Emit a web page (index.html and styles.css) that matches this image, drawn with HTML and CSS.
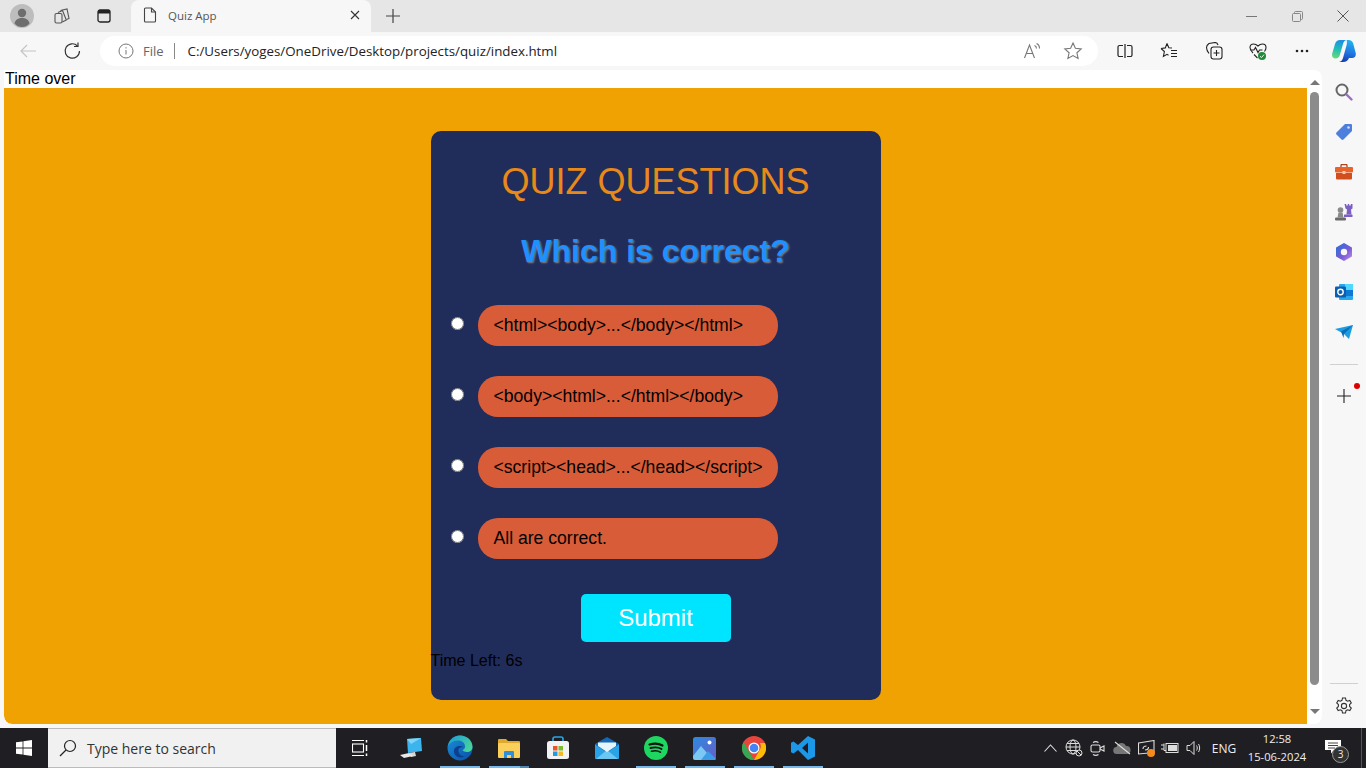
FILE: index.html
```html
<!DOCTYPE html>
<html lang="en">
<head>
    <meta charset="UTF-8">
    <meta name="viewport" content="width=device-width, initial-scale=1.0">
    <title>Quiz App</title>
    <link rel="stylesheet" href="styles.css">
</head>
<body>
  <div class="window">

    <!-- tab strip -->
    <div class="tabstrip">
      <div class="avatar">
        <svg width="24" height="24" viewBox="0 0 24 24"><circle cx="12" cy="12" r="12" fill="#bdbdbd"/><circle cx="12" cy="9" r="4.2" fill="#6e6e6e"/><path d="M4.5 19.5c.8-4 3.8-5.5 7.5-5.5s6.7 1.5 7.5 5.5c-2 2.500-4.500 3.500-7.500 3.500s-5.500-1-7.500-3.500z" fill="#6e6e6e"/></svg>
      </div>
      <div class="strip-btn workspaces">
        <svg width="18" height="18" viewBox="0 0 18 18" fill="none" stroke="#555" stroke-width="1.1"><path d="M7.500 3.500l6.500-1.500 2 9.500-2.500 1"/><path d="M5 5.500l4.500-2 3.800 9.500-4 2"/><rect x="2" y="6.500" width="7" height="9.500" rx="1.500"/></svg>
      </div>
      <div class="strip-btn tabactions">
        <svg width="16" height="16" viewBox="0 0 16 16"><rect x="2" y="2" width="12" height="12" rx="2" fill="none" stroke="#222" stroke-width="1.300"/><path d="M2 3.500a1.500 1.500 0 0 1 1.500-1.500h9a1.500 1.500 0 0 1 1.500 1.500v2h-12z" fill="#222"/></svg>
      </div>
      <div class="tab">
        <svg class="tab-icon" width="14" height="16" viewBox="0 0 14 16" fill="none" stroke="#444" stroke-width="1.100"><path d="M2.500 1h6l4 4v9a1 1 0 0 1-1 1h-9a1 1 0 0 1-1-1v-12a1 1 0 0 1 1-1z"/><path d="M8.500 1v4h4"/></svg>
        <span class="tab-title">Quiz App</span>
        <svg class="tab-close" width="10" height="10" viewBox="0 0 10 10" stroke="#333" stroke-width="1.100"><path d="M1 1l8 8M9 1l-8 8"/></svg>
      </div>
      <div class="strip-btn newtab">
        <svg width="16" height="16" viewBox="0 0 16 16" stroke="#444" stroke-width="1.200"><path d="M8 1v14M1 8h14"/></svg>
      </div>
      <div class="winctrls">
        <div class="winctrl"><svg width="11" height="11" viewBox="0 0 11 11" stroke="#777"><path d="M0 5.500h11"/></svg></div>
        <div class="winctrl"><svg width="11" height="11" viewBox="0 0 11 11" fill="none" stroke="#888"><rect x=".5" y="2.500" width="8" height="8" rx="1"/><path d="M2.500 2.500v-1a1 1 0 0 1 1-1h6a1 1 0 0 1 1 1v6a1 1 0 0 1-1 1h-1"/></svg></div>
        <div class="winctrl"><svg width="12" height="12" viewBox="0 0 12 12" stroke="#555"><path d="M.5.5l11 11M11.500.5l-11 11"/></svg></div>
      </div>
    </div>

    <!-- address bar row -->
    <div class="toolbar">
      <div class="nav-btn back">
        <svg width="18" height="16" viewBox="0 0 18 16" fill="none" stroke="#c4c4c4" stroke-width="1.200"><path d="M17 8h-15M8 2l-6 6 6 6"/></svg>
      </div>
      <div class="nav-btn reload">
        <svg width="18" height="18" viewBox="0 0 18 18" fill="none" stroke="#333" stroke-width="1.200"><path d="M14.500 4a7.200 7.200 0 1 0 2 5"/><path d="M15 .5v4h-4"/></svg>
      </div>
      <div class="addressbar">
        <svg class="info-icon" width="16" height="16" viewBox="0 0 16 16" fill="none" stroke="#777"><circle cx="8" cy="8" r="7"/><path d="M8 7v4.500M8 4.200v1.300"/></svg>
        <span class="file-label">File</span>
        <span class="addr-sep"></span>
        <span class="url">C:/Users/yoges/OneDrive/Desktop/projects/quiz/index.html</span>
        <div class="addr-right">
          <svg width="20" height="18" viewBox="0 0 20 18" fill="none" stroke="#777" stroke-width="1.100"><path d="M1.500 16l5-13 5 13M3.500 11.500h6"/><path d="M11.500 3.500c1.500.5 2 1.500 2 3M13.500 1.500c2 .8 3 2.500 3 5"/></svg>
          <svg width="20" height="20" viewBox="0 0 20 20" fill="none" stroke="#777" stroke-width="1.100"><path d="M10 2l2.400 5.300 5.800.6-4.300 3.900 1.200 5.700-5.100-2.900-5.100 2.900 1.200-5.700-4.300-3.900 5.800-.6z"/></svg>
        </div>
      </div>
      <div class="tool-btns">
        <div class="tool-btn"><svg width="16" height="14" viewBox="0 0 16 14" fill="none" stroke="#222" stroke-width="1.200"><path d="M6 1.500h-3.500a1.500 1.500 0 0 0-1.500 1.500v8a1.500 1.500 0 0 0 1.500 1.500h3.500M10 1.500h3.500a1.500 1.500 0 0 1 1.500 1.500v8a1.500 1.500 0 0 1-1.500 1.500h-3.500M8 0v14"/></svg></div>
        <div class="tool-btn"><svg width="18" height="18" viewBox="0 0 18 18" fill="none" stroke="#222" stroke-width="1.100"><path d="M7 1.500l1.800 4.200 3.200.3M1 6.500l4.300-.6 1.700-4.400M1 6.500l3.400 3-1 5 3.600-2.200 1.500.9"/><path d="M11 8.500h6M11 11.500h6M11 14.500h6"/></svg></div>
        <div class="tool-btn"><svg width="18" height="18" viewBox="0 0 18 18" fill="none" stroke="#222" stroke-width="1.100"><path d="M4 11.500c-1.500-2-2.500-4-2.500-6s1-3 2.500-4l6-1c1.500 0 2.500 1 3 2.500"/><rect x="6" y="5" width="11" height="12" rx="2.500"/><path d="M11.500 8v6M8.500 11h6"/></svg></div>
        <div class="tool-btn">
          <svg width="18" height="18" viewBox="0 0 18 18" fill="none" stroke="#222" stroke-width="1.100"><path d="M4 11c-2-2-3-3.500-3-5.500s1.500-3.500 3.500-3.500c2 0 3.500 1 4.500 2 1-1 2.500-2 4.500-2s3.500 1.500 3.500 3.500-.5 2.500-1.500 4"/><path d="M1.500 8h3.500l1.500-2.500 2.500 5 1.500-2.500h3"/><path d="M5 12.500l3.500 3.500"/></svg>
          <svg class="health-dot" width="8" height="8" viewBox="0 0 8 8"><circle cx="4" cy="4" r="4" fill="#1f8a3a"/><path d="M2 4.200l1.500 1.400 2.500-3" fill="none" stroke="#fff" stroke-width=".9"/></svg>
        </div>
        <div class="tool-btn"><svg width="14" height="4" viewBox="0 0 14 4" fill="#222"><circle cx="2" cy="2" r="1.300"/><circle cx="7" cy="2" r="1.300"/><circle cx="12" cy="2" r="1.300"/></svg></div>
      </div>
      <div class="copilot">
        <svg width="24" height="24" viewBox="0 0 24 24"><defs><linearGradient id="cpA" x1="0.5" y1="0" x2="0.3" y2="1"><stop offset="0" stop-color="#1b8fe6"/><stop offset=".55" stop-color="#25c2b0"/><stop offset="1" stop-color="#6fd67a"/></linearGradient><linearGradient id="cpB" x1="0.6" y1="0" x2="0.4" y2="1"><stop offset="0" stop-color="#22b4ee"/><stop offset=".55" stop-color="#1f78e4"/><stop offset="1" stop-color="#1a3cae"/></linearGradient></defs><path d="M8 1h7c-2 0-3.300 1.500-4 4l-3 10.500c-.6 2.500-2.200 4-4.500 4-2.500 0-4-2-3.300-5l2.800-9.500c.7-2.500 2.800-4 5-4z" fill="url(#cpA)"/><path d="M14.500 1h2c2.500 0 4 1.500 4.700 3.500l2.500 9.500c.6 2.500-.8 5-3.700 5h-3c-1 2.500-3 4-6 4h-4c2.200-.5 3.300-1.800 4-4l3.500-12.500c.7-2.500.5-5.500 0-5.500z" fill="url(#cpB)"/></svg>
      </div>
    </div>

    <div class="main">
      <div class="page">
        <div class="content">
          <div class="time-over">Time over</div>
          <div class="stage">
            <div class="quiz-card">
              <h1>QUIZ QUESTIONS</h1>
              <h2>Which is correct?</h2>
              <div class="option-row">
                <input type="radio" name="answer" id="a">
                <label class="option" for="a">&lt;html&gt;&lt;body&gt;...&lt;/body&gt;&lt;/html&gt;</label>
              </div>
              <div class="option-row">
                <input type="radio" name="answer" id="b">
                <label class="option" for="b">&lt;body&gt;&lt;html&gt;...&lt;/html&gt;&lt;/body&gt;</label>
              </div>
              <div class="option-row">
                <input type="radio" name="answer" id="c">
                <label class="option" for="c">&lt;script&gt;&lt;head&gt;...&lt;/head&gt;&lt;/script&gt;</label>
              </div>
              <div class="option-row">
                <input type="radio" name="answer" id="d">
                <label class="option" for="d">All are correct.</label>
              </div>
              <button class="submit" type="button">Submit</button>
              <div class="time-left">Time Left: 6s</div>
            </div>
          </div>
        </div>
        <div class="scrollbar">
          <span class="arrow-up"></span>
          <span class="thumb"></span>
          <span class="arrow-down"></span>
        </div>
      </div>

      <!-- edge sidebar -->
      <div class="sidebar">
        <div class="side-btn"><svg width="20" height="20" viewBox="0 0 20 20" fill="none"><circle cx="8" cy="8" r="5.500" stroke="#666" stroke-width="2"/><path d="M12.500 12.500l5 5" stroke="#9a6cc8" stroke-width="2.400" stroke-linecap="round"/></svg></div>
        <div class="side-btn"><svg width="18" height="18" viewBox="0 0 18 18"><path d="M10 1h6a1 1 0 0 1 1 1v6l-8.500 8.500a1.500 1.500 0 0 1-2 0l-5-5a1.500 1.500 0 0 1 0-2z" fill="#4f7fdc"/><circle cx="13.500" cy="4.500" r="1.300" fill="#cfe0fb"/></svg></div>
        <div class="side-btn"><svg width="18" height="16" viewBox="0 0 18 16"><path d="M6 3v-1.500a1 1 0 0 1 1-1h4a1 1 0 0 1 1 1v1.500" fill="none" stroke="#b5431c" stroke-width="1.300"/><rect y="3" width="18" height="5.500" rx="1" fill="#e8622a"/><path d="M1 9h16v5.500a1 1 0 0 1-1 1h-14a1 1 0 0 1-1-1z" fill="#d14f1e"/><rect x="7.500" y="7" width="3" height="3" fill="#f8c9a8"/></svg></div>
        <div class="side-btn"><svg width="18" height="18" viewBox="0 0 18 18"><circle cx="5.500" cy="7" r="2.800" fill="#8a8a8a"/><path d="M3.500 9.500h4l1 5h-6z" fill="#8a8a8a"/><rect x="0" y="14.500" width="11" height="3" rx="1" fill="#6a6a6a"/><path d="M10 1h1.700v1.500h1.600v-1.500h1.400v1.500h1.600v-1.500h1.700v4.500l-1.500 1 .5 5h-5l.5-5-1.500-1z" fill="#7b5fc4" transform="translate(-.5 0)"/><rect x="9" y="11.500" width="8.500" height="2.500" rx=".5" fill="#7b5fc4"/></svg></div>
        <div class="side-btn"><svg width="18" height="18" viewBox="0 0 18 18"><defs><linearGradient id="m3" x1="0" y1="0" x2="1" y2="1"><stop offset="0" stop-color="#2a6fd6"/><stop offset=".6" stop-color="#7a5bd6"/><stop offset="1" stop-color="#c08ae6"/></linearGradient></defs><path d="M9 1l7 4v8l-7 4-7-4v-8z" fill="url(#m3)" stroke="url(#m3)" stroke-width="2" stroke-linejoin="round"/><circle cx="9" cy="9" r="3.200" fill="#f7f7f7"/></svg></div>
        <div class="side-btn"><svg width="18" height="18" viewBox="0 0 18 18"><rect x="4" y="1" width="14" height="16" rx="1" fill="#28a8ea"/><rect x="10" y="1" width="8" height="6" fill="#50d9ff"/><rect x="10" y="7" width="8" height="6" fill="#0f78d4"/><rect y="3.500" width="11" height="11" rx="1" fill="#0a5fb0"/><circle cx="5.500" cy="9" r="2.700" fill="none" stroke="#fff" stroke-width="1.400"/></svg></div>
        <div class="side-btn"><svg width="18" height="16" viewBox="0 0 18 16"><path d="M0 5l18-4-4 14-5-5z" fill="#1b9de2"/><path d="M6 7.500l12-6.500-9 9-.5 4z" fill="#0b6fb8"/></svg></div>
        <div class="side-line"></div>
        <div class="side-btn">
          <svg width="14" height="14" viewBox="0 0 14 14" stroke="#222" stroke-width="1.100"><path d="M7 0v14M0 7h14"/></svg>
          <span class="red-dot"></span>
        </div>
        <div class="side-bottom">
          <div class="side-line"></div>
          <div class="side-btn gear">
            <svg width="18" height="18" viewBox="0 0 18 18" fill="none" stroke="#333" stroke-width="1.100"><path d="M7.500 1h3l.5 2.300 1.600.9 2.200-.8 1.500 2.600-1.700 1.600v1.800l1.700 1.600-1.500 2.600-2.200-.8-1.600.9-.5 2.300h-3l-.5-2.300-1.600-.9-2.200.8-1.500-2.600 1.700-1.600v-1.800l-1.700-1.600 1.500-2.600 2.200.8 1.600-.9z"/><circle cx="9" cy="9" r="2.600"/></svg>
          </div>
        </div>
      </div>
    </div>

    <!-- windows taskbar -->
    <div class="taskbar">
      <div class="start">
        <svg width="16" height="16" viewBox="0 0 16 16" fill="#fff"><path d="M0 2.300l6.600-.9v6.200h-6.600zM7.400 1.300l8.600-1.300v7.600h-8.600zM0 8.400h6.600v6.200l-6.600-.9zM7.400 8.400h8.600v7.600l-8.600-1.300z"/></svg>
      </div>
      <div class="searchbox">
        <svg width="18" height="18" viewBox="0 0 18 18" fill="none" stroke="#222" stroke-width="1.200"><circle cx="11" cy="7" r="5.500"/><path d="M7 11l-6 6"/></svg>
        <span>Type here to search</span>
      </div>
      <div class="task-item taskview">
        <svg width="16" height="16" viewBox="0 0 16 16" fill="none" stroke="#fff" stroke-width="1.100"><path d="M0 .5h12M0 15.500h12"/><rect x=".5" y="4" width="11" height="8"/><path d="M14.500 0v2.500M14.500 5v6M14.500 13.500v2.500" stroke-width="1.500"/></svg>
      </div>
      <div class="task-item">
        <svg width="24" height="24" viewBox="0 0 24 24"><path d="M8 3l14-1 1 13-14 2z" fill="#3cb4ee"/><path d="M8 3l14-1-10 6z" fill="#7fd4f8"/><path d="M10 17l6-1 1 4-5 1z" fill="#d8d8d8"/><path d="M1 19l9-2 4 3-9 2z" fill="#eaeaea"/></svg>
      </div>
      <div class="task-item on">
        <svg width="26" height="26" viewBox="0 0 26 26"><defs><linearGradient id="edgeA" x1="0" y1="0" x2="1" y2=".6"><stop offset="0" stop-color="#1d9ad8"/><stop offset="1" stop-color="#46d39a"/></linearGradient><linearGradient id="edgeB" x1="0" y1="0" x2="1" y2="1"><stop offset="0" stop-color="#1a8fd8"/><stop offset="1" stop-color="#0b4fa8"/></linearGradient></defs><circle cx="13" cy="13" r="12.500" fill="url(#edgeB)"/><path d="M1 11c1-6 6-10.500 12-10.500 7 0 12.500 5 12.500 11.500 0 3-2.500 5-5.500 5-2 0-4-.8-4.500-2 1.500-.5 2.500-1.500 2.500-3.500 0-3.500-3-6-7-6-4.500 0-8 2-10 5.500z" fill="url(#edgeA)"/><path d="M7 16c0-3 2.500-5 6-5 1.500 0 2.500.5 3 1.500-1.500-.5-4 0-4.500 2.500-.5 3 2 6 6 6.500-1.500.8-3 1-4.500 1-3.500 0-6-3-6-6.500z" fill="#0c3f8e"/></svg>
      </div>
      <div class="task-item on split">
        <svg width="24" height="22" viewBox="0 0 24 22"><path d="M1 3a1 1 0 0 1 1-1h7l2 2h11a1 1 0 0 1 1 1v3h-22z" fill="#e0a92e"/><rect x="1" y="6" width="22" height="15" rx="1" fill="#fbcf5b"/><path d="M7 21v-6a1 1 0 0 1 1-1h8a1 1 0 0 1 1 1v6h-3v-3h-4v3z" fill="#2f8fd8"/></svg>
      </div>
      <div class="task-item">
        <svg width="24" height="24" viewBox="0 0 24 24"><path d="M7 5v-2a2 2 0 0 1 2-2h6a2 2 0 0 1 2 2v2" fill="none" stroke="#2aa5e8" stroke-width="1.600"/><rect x="1" y="5" width="22" height="18" rx="2.500" fill="#f2f2f2"/><rect x="7" y="10" width="4.500" height="4.500" fill="#e8562a"/><rect x="12.500" y="10" width="4.500" height="4.500" fill="#7dbb2c"/><rect x="7" y="15.500" width="4.500" height="4.500" fill="#1e9be8"/><rect x="12.500" y="15.500" width="4.500" height="4.500" fill="#f6b81e"/></svg>
      </div>
      <div class="task-item">
        <svg width="24" height="22" viewBox="0 0 24 22"><path d="M12 0l12 7v14a1 1 0 0 1-1 1h-22a1 1 0 0 1-1-1v-14z" fill="#1369b8"/><path d="M0 7.500l12 8 12-8v13.500a1 1 0 0 1-1 1h-22a1 1 0 0 1-1-1z" fill="#29a3e8"/><path d="M1 22l11-9 11 9z" fill="#6cc6f2"/><path d="M3 5.500h18v3.500l-9 6-9-6z" fill="#e6f4fc"/></svg>
      </div>
      <div class="task-item on">
        <svg width="24" height="24" viewBox="0 0 24 24"><circle cx="12" cy="12" r="12" fill="#1ed760"/><g fill="none" stroke="#111" stroke-linecap="round"><path d="M5.500 8.500c4.500-1.300 9.500-1 13 1" stroke-width="2.200"/><path d="M6.500 12c4-1 8-.8 11 1" stroke-width="1.900"/><path d="M7.500 15.300c3.200-.8 6.500-.6 9 .9" stroke-width="1.600"/></g></svg>
      </div>
      <div class="task-item on">
        <svg width="23" height="23" viewBox="0 0 23 23"><defs><linearGradient id="ph" x1="0" y1="0" x2="1" y2="1"><stop offset="0" stop-color="#2c8be0"/><stop offset="1" stop-color="#6a5cc8"/></linearGradient></defs><rect width="23" height="23" rx="2.500" fill="url(#ph)"/><circle cx="16.500" cy="5.500" r="2" fill="#fff"/><path d="M0 19l8-10 6 7-2 7h-9.500a2.500 2.500 0 0 1-2.500-2.500z" fill="#7cc8f4"/><path d="M8 23l7-9 8 8-1 1z" fill="#3d9ce8"/></svg>
      </div>
      <div class="task-item on">
        <svg width="24" height="24" viewBox="0 0 24 24"><circle cx="12" cy="12" r="12" fill="#e8453c"/><path d="M12 24a12 12 0 0 1-10.400-18l6 10.500 4.400 7.500z" fill="#34a853"/><path d="M12 24l6-10.500a6.900 6.900 0 0 0 0-6.500h5a12 12 0 0 1-11 17z" fill="#fbbc05"/><circle cx="12" cy="12" r="5.500" fill="#fff"/><circle cx="12" cy="12" r="4.300" fill="#4285f4"/></svg>
      </div>
      <div class="task-item on">
        <svg width="24" height="24" viewBox="0 0 24 24"><path d="M17 0l7 3.500v17l-7 3.500-10-10-4.500 3.500-2.500-1.300v-9.400l2.500-1.300 4.500 3.500zM17 6.500l-6 5.500 6 5.500z" fill="#1c98e8"/></svg>
      </div>

      <div class="tray">
        <div class="tray-item"><svg width="13" height="8" viewBox="0 0 13 8" fill="none" stroke="#ddd" stroke-width="1.100"><path d="M.5 7.500l6-6.500 6 6.500"/></svg></div>
        <div class="tray-item"><svg width="18" height="18" viewBox="0 0 18 18" fill="none" stroke="#ddd"><circle cx="8" cy="8" r="7"/><ellipse cx="8" cy="8" rx="3" ry="7"/><path d="M1 8h14M2 4.500h12M2 11.500h12"/><circle cx="14" cy="14" r="3" fill="#222"/><path d="M12 12l4 4"/></svg></div>
        <div class="tray-item"><svg width="16" height="18" viewBox="0 0 16 18" fill="none" stroke="#ddd" stroke-width="1.100"><rect x="1" y="6" width="9" height="7" rx="1.500"/><path d="M10 9l4-2v5l-4-2M3 3.500c1.500-1 4-1 5.500 0M3 15.500c1.500 1 4 1 5.500 0"/></svg></div>
        <div class="tray-item"><svg width="18" height="14" viewBox="0 0 18 14"><path d="M4 13a3.500 3.500 0 0 1-.5-7 5 5 0 0 1 9.500-1 4 4 0 0 1 1 8z" fill="#777"/><path d="M2 1l15 12" stroke="#ddd" stroke-width="1.100"/></svg></div>
        <div class="tray-item">
          <svg width="17" height="16" viewBox="0 0 17 16" fill="none" stroke="#ddd" stroke-width="1.100"><path d="M.5 3l15.500-2.500v12l-15.500 1.500z"/><path d="M5 9c0-2 1-3 3.500-3M10.500 7c0 2-1 3-3.500 3"/></svg>
          <span class="orange-dot"></span>
        </div>
        <div class="tray-item"><svg width="18" height="12" viewBox="0 0 18 12"><rect x="5" y="1.500" width="12" height="9" fill="none" stroke="#ddd"/><rect x="7" y="3" width="9" height="6" fill="#ddd"/><path d="M0 3h3M0 7h3M3 1.500v7h2" stroke="#ddd" fill="none"/></svg></div>
        <div class="tray-item"><svg width="16" height="14" viewBox="0 0 16 14" fill="none" stroke="#ddd"><path d="M1 4.500h3l4-4v13l-4-4h-3z"/><path d="M10.500 4.500c1 1.500 1 3.500 0 5M12.500 3c1.500 2 1.500 6 0 8"/></svg></div>
        <div class="lang">ENG</div>
        <div class="clock"><span>12:58</span><span>15-06-2024</span></div>
        <div class="notif">
          <svg width="16" height="14" viewBox="0 0 16 14"><path d="M0 0h16v10h-7l-3 3.500v-3.500h-6z" fill="#fff"/><path d="M3 3h10M3 5.500h10M3 8h7" stroke="#444"/></svg>
          <span class="notif-count">3</span>
        </div>
        <div class="show-desktop"></div>
      </div>
    </div>
  </div>
</body>
</html>
```

FILE: styles.css
```css
* {
    box-sizing: border-box;
}

body {
    margin: 0;
    overflow: hidden;
    font-family: "Liberation Sans", Arial, sans-serif;
}

.window {
    display: flex;
    flex-direction: column;
    width: 1366px;
    height: 768px;
    background-color: #f7f7f7;
}

/* tab strip */
.tabstrip {
    display: flex;
    align-items: center;
    height: 32px;
    background-color: #e6e6e6;
    font-family: "Open Sans", "Noto Sans", sans-serif;
}

.avatar {
    display: flex;
    margin-left: 10px;
}

.strip-btn {
    display: flex;
    align-items: center;
    justify-content: center;
}

.workspaces {
    margin-left: 19px;
    width: 18px;
}

.tabactions {
    margin-left: 25px;
    width: 16px;
}

.tab {
    display: flex;
    align-items: center;
    align-self: stretch;
    width: 240px;
    margin-left: 19px;
    padding: 0 11px 2px 12px;
    background-color: #f7f7f7;
    border-radius: 8px 8px 0 0;
}

.tab-title {
    flex: 1;
    margin-left: 11px;
    font-size: 11.5px;
    color: #555;
}

.newtab {
    margin-left: 14px;
    width: 16px;
}

.winctrls {
    display: flex;
    margin-left: auto;
}

.winctrl {
    display: flex;
    align-items: center;
    justify-content: center;
    width: 46px;
    height: 32px;
}

/* address bar row */
.toolbar {
    display: flex;
    align-items: center;
    height: 38px;
}

.nav-btn {
    display: flex;
    justify-content: center;
    width: 44px;
}

.back {
    margin-left: 6px;
}

.addressbar {
    display: flex;
    align-items: center;
    width: 998px;
    height: 30px;
    margin-left: 6px;
    padding: 0 15px 0 18px;
    background-color: #fff;
    border-radius: 15px;
    font-family: "Open Sans", "Noto Sans", sans-serif;
    font-size: 13px;
}

.file-label {
    margin-left: 9px;
    color: #666;
}

.addr-sep {
    width: 1px;
    height: 16px;
    margin: 0 13px 0 10px;
    background-color: #888;
}

.url {
    font-size: 13.33px;
    color: #222;
}

.addr-right {
    display: flex;
    align-items: center;
    gap: 20px;
    margin-left: auto;
}

.tool-btns {
    display: flex;
    margin-left: 5px;
}

.tool-btn {
    position: relative;
    display: flex;
    align-items: center;
    justify-content: center;
    width: 44.25px;
    height: 30px;
}

.health-dot {
    position: absolute;
    left: 22px;
    top: 16px;
}

.copilot {
    display: flex;
    margin-left: 8px;
}

/* main area */
.main {
    display: flex;
    height: 658px;
}

.page {
    display: flex;
    width: 1318px;
    height: 654px;
    margin-left: 4px;
    background-color: #fff;
    border-radius: 0 8px 8px 8px;
    overflow: hidden;
}

.content {
    display: flex;
    flex-direction: column;
    flex: 1;
}

.time-over {
    height: 18px;
    padding-left: 1px;
    font-size: 16px;
    line-height: 18px;
    color: #000;
}

.stage {
    flex: 1;
    padding-top: 43px;
    background-color: #f0a202;
    border-radius: 0 0 0 8px;
}

.quiz-card {
    width: 450px;
    height: 569px;
    margin: 0 auto;
    padding-top: 30px;
    background-color: #202c5a;
    border-radius: 10px;
}

h1 {
    margin: 0;
    font-size: 36px;
    font-weight: normal;
    line-height: 41px;
    text-align: center;
    color: #e8891a;
}

h2 {
    margin: 31px 0 35px;
    font-size: 32px;
    font-weight: bold;
    line-height: 37px;
    text-align: center;
    color: #1e90ff;
    text-shadow: 1px 1px 2px #888;
}

.option-row {
    display: flex;
    align-items: flex-start;
    margin-bottom: 30px;
    padding-left: 20px;
}

.option-row input {
    width: 13px;
    height: 13px;
    margin: 12px 14px 0 0;
}

.option {
    width: 300px;
    height: 41px;
    padding-left: 16px;
    background-color: #d95c38;
    border-radius: 20px;
    font-size: 17.6px;
    line-height: 41px;
    color: #000;
}

.submit {
    display: block;
    width: 150px;
    height: 48px;
    margin: 35px auto 0;
    border: none;
    border-radius: 5px;
    background-color: #00e5ff;
    color: #fff;
    font-family: inherit;
    font-size: 24px;
}

.time-left {
    margin-top: 9px;
    font-size: 16px;
    line-height: 20px;
    color: #000;
}

/* fake page scrollbar */
.scrollbar {
    display: flex;
    flex-direction: column;
    align-items: center;
    width: 15px;
    padding: 10px 0 10px;
}

.thumb {
    flex: 1;
    width: 9px;
    margin: 7px 0 24px;
    background-color: #8c8c8c;
    border-radius: 5px;
}

.arrow-up {
    border: 5px solid transparent;
    border-top: none;
    border-bottom: 5px solid #777;
}

.arrow-down {
    border: 5px solid transparent;
    border-bottom: none;
    border-top: 5px solid #777;
}

/* edge sidebar */
.sidebar {
    display: flex;
    flex-direction: column;
    flex: 1;
    padding-top: 2px;
}

.side-btn {
    position: relative;
    display: flex;
    align-items: center;
    justify-content: center;
    height: 40px;
}

.side-line {
    height: 1px;
    margin: 12px 8px 11px;
    background-color: #d0d0d0;
}

.red-dot {
    position: absolute;
    left: 32px;
    top: 7px;
    width: 6px;
    height: 6px;
    border-radius: 50%;
    background-color: #d00;
}

.side-bottom {
    margin-top: auto;
}

.side-bottom .side-line {
    margin-bottom: 0;
}

.gear {
    height: 44px;
}

/* windows taskbar */
.taskbar {
    display: flex;
    align-items: stretch;
    height: 40px;
    background-color: #1f1f23;
}

.start {
    display: flex;
    align-items: center;
    justify-content: center;
    width: 48px;
}

.searchbox {
    display: flex;
    align-items: center;
    gap: 10px;
    width: 288px;
    padding-left: 11px;
    background-color: #f1f1f1;
    border: 1px solid #bbb;
    border-left: none;
    border-right: none;
    font-family: "Open Sans", "Noto Sans", sans-serif;
    font-size: 14px;
    color: #333;
}

.task-item {
    position: relative;
    display: flex;
    align-items: center;
    justify-content: center;
    width: 49px;
}

.taskview {
    width: 50px;
    padding-right: 2px;
}

.task-item.on::after {
    content: "";
    position: absolute;
    left: 5px;
    right: 4px;
    bottom: 0;
    height: 2px;
    background-color: #76b9ed;
}

.task-item.split::after {
    background: linear-gradient(to right, #76b9ed 31px, #4d86b3 31px);
}

.tray {
    display: flex;
    align-items: center;
    margin-left: auto;
    color: #eee;
    font-family: "Open Sans", "Noto Sans", sans-serif;
}

.tray-item {
    position: relative;
    display: flex;
    align-items: center;
    justify-content: center;
    width: 24px;
    height: 40px;
}

.orange-dot {
    position: absolute;
    left: 13px;
    top: 21px;
    width: 8px;
    height: 8px;
    border-radius: 50%;
    background-color: #f58a1f;
}

.lang {
    width: 36px;
    font-size: 12px;
    text-align: center;
}

.clock {
    display: flex;
    flex-direction: column;
    align-items: center;
    width: 70px;
    font-size: 11.2px;
    line-height: 18px;
}

.notif {
    position: relative;
    display: flex;
    justify-content: center;
    align-self: stretch;
    width: 40px;
    margin: 0 8px 0 1px;
    padding-top: 12px;
}

.notif-count {
    position: absolute;
    left: 19px;
    top: 18px;
    width: 17px;
    height: 17px;
    border: 1px solid #999;
    border-radius: 50%;
    background-color: #333;
    font-size: 10px;
    line-height: 15px;
    text-align: center;
}

.show-desktop {
    width: 5px;
    height: 40px;
    border-left: 1px solid #555;
}
```
